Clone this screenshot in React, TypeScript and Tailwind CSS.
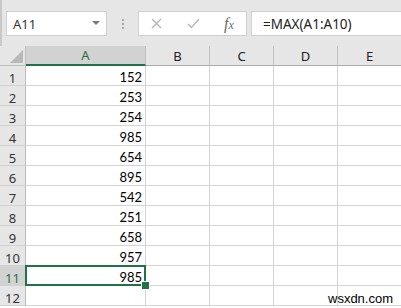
import React from 'react';

const COLS = ['A', 'B', 'C', 'D', 'E'];
const VALUES = [152, 253, 254, 985, 654, 895, 542, 251, 658, 957, 985];
const ACTIVE_ROW = 11;

function RowHeader({ n }: { n: number }) {
  const on = n === ACTIVE_ROW;
  return (
    <div
      className={
        'h-5 flex items-end justify-center leading-[14px] text-[13px] border-r border-b border-r-[#bdbdbd] border-b-[#d0d0d0] ' +
        (on ? 'bg-[#d2d2d2] text-[#217346]' : 'bg-[#e6e6e6] text-[#333]')
      }
    >
      {n}
    </div>
  );
}

function Cell({ value, active }: { value?: number; active?: boolean }) {
  return (
    <div className="relative h-5 flex items-end justify-end pr-[3px] leading-[16px] text-[13px] font-['Lato',sans-serif] text-black border-r border-b border-[#d4d4d4]">
      {value}
      {active && (
        <>
          <div className="absolute z-10 -inset-px border-2 border-[#217346]" />
          <div className="absolute z-20 -right-[5px] -bottom-[5px] w-[9px] h-[9px] bg-[#217346] border-[1.5px] border-white" />
        </>
      )}
    </div>
  );
}

export default function App() {
  const rows = Array.from({ length: 12 }, (_, i) => i + 1);

  return (
    <div className="relative w-[401px] h-[308px] overflow-hidden bg-white font-['Noto_Sans',sans-serif]">
      {/* Formula bar */}
      <div className="h-[46px] bg-[#e6e6e6] border-l-2 border-[#c8c8c8] flex items-start pt-[11px]">
        <div className="ml-[4px] w-[101px] h-[25px] bg-white border border-[#d0d0d0] flex items-center justify-between pl-[6px] pr-[6px] pt-[2px]">
          <span className="text-[13px] text-[#333]">A11</span>
          <svg width="8" height="5" viewBox="0 0 8 5" className="-mt-[2px]">
            <path d="M0 0 L8 0 L4 4 Z" fill="#7a7a7a" />
          </svg>
        </div>
        <div className="w-[31px] flex flex-col items-center gap-[2px] pt-[8px]">
          <span className="w-[2px] h-[2px] bg-[#a8a8a8]" />
          <span className="w-[2px] h-[2px] bg-[#a8a8a8]" />
          <span className="w-[2px] h-[2px] bg-[#a8a8a8]" />
        </div>
        <div className="w-[109px] h-[25px] bg-white border border-[#d0d0d0] flex items-center">
          <svg width="11" height="11" viewBox="0 0 11 11" className="ml-[12px]">
            <path d="M1 1 L10 10 M10 1 L1 10" stroke="#b4b4b4" strokeWidth="1.3" fill="none" />
          </svg>
          <svg width="13" height="11" viewBox="0 0 13 11" className="ml-[25px]">
            <path d="M1 6 L4.5 9.5 L12 1" stroke="#b4b4b4" strokeWidth="1.3" fill="none" />
          </svg>
          <span className="ml-[24px] font-['Liberation_Serif',serif] italic text-[16px] text-[#6a6a6a] leading-none">
            f<span className="text-[12px]">x</span>
          </span>
        </div>
        <div className="ml-[4px] flex-1 h-[25px] bg-white border border-r-0 border-[#d0d0d0] flex items-center pl-[11px] pt-[1px]">
          <span className="text-[13.5px] text-[#222]">=MAX(A1:A10)</span>
        </div>
      </div>

      {/* Sheet grid */}
      <div className="grid grid-cols-[26px_120px_64px_64px_64px_64px]">
        <div className="relative h-5 bg-[#e6e6e6] border-r border-b border-[#bdbdbd]">
          <svg width="14" height="14" viewBox="0 0 14 14" className="absolute left-[10px] top-[4px]">
            <path d="M13 0 L13 13 L0 13 Z" fill="#b8b8b8" />
          </svg>
        </div>
        {COLS.map((c) => (
          <div
            key={c}
            className={
              'h-5 flex items-center justify-center pt-[2px] text-[13px] border-r border-r-[#c0c0c0] ' +
              (c === 'A'
                ? 'bg-[#d2d2d2] text-[#2b6a47] border-b-2 border-b-[#217346]'
                : 'bg-[#e6e6e6] text-[#222] border-b border-b-[#ababab]')
            }
          >
            {c}
          </div>
        ))}

        {rows.map((n) => (
          <React.Fragment key={n}>
            <RowHeader n={n} />
            <Cell value={VALUES[n - 1]} active={n === ACTIVE_ROW} />
            <Cell />
            <Cell />
            <Cell />
            <Cell />
          </React.Fragment>
        ))}
      </div>

      {/* watermark */}
      <span className="absolute left-[328px] top-[289px] text-[13px] font-['Liberation_Sans',sans-serif] text-black">
        wsxdn.com
      </span>
    </div>
  );
}
